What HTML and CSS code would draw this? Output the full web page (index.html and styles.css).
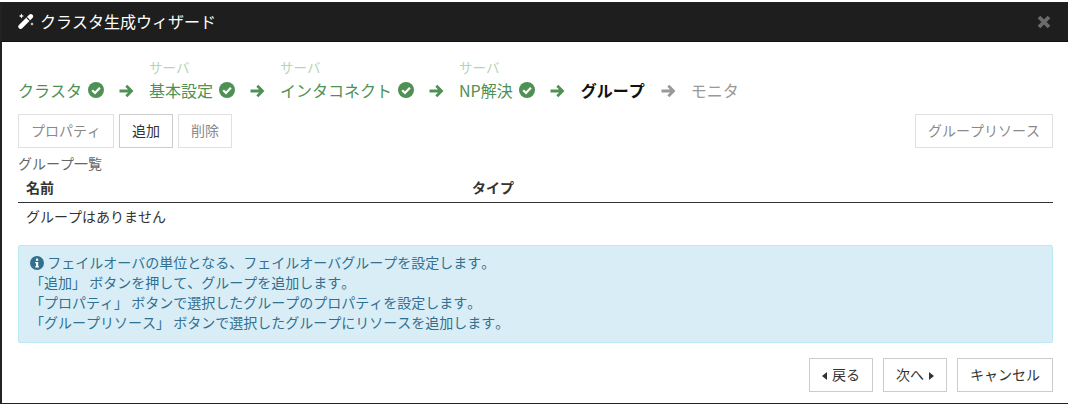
FILE: index.html
```html
<!DOCTYPE html>
<html lang="ja">
<head>
    <meta charset="UTF-8">
    <title>クラスタ生成ウィザード</title>
    <link rel="stylesheet" href="styles.css">
</head>
<body>
    <div class="dialog">
        <div class="dialog-header">
            <svg class="wand" viewBox="0 0 16 16" width="16" height="16">
                <path d="M2.6 13.6 12.8 3.4" fill="none" stroke="#fff" stroke-width="4.6" stroke-linecap="round"/>
                <path d="M8.6 4.4 11.8 7.6" fill="none" stroke="#1e1e1e" stroke-width="1.2"/>
                <path d="M3.4 .4 4.2 2.2 6 3 4.2 3.8 3.4 5.6 2.6 3.8 .8 3 2.6 2.2zM14 9.2 14.6 10.4 15.8 11 14.6 11.6 14 12.8 13.4 11.6 12.2 11 13.4 10.4z" fill="#fff"/>
            </svg>
            <span class="dialog-title">クラスタ生成ウィザード</span>
            <svg class="close" viewBox="0 0 14 14" width="14" height="14"><path d="M2 2 12 12M12 2 2 12" fill="none" stroke="#6b6b6b" stroke-width="3.8"/></svg>
        </div>
        <div class="dialog-body">
            <div class="steps">
                <div class="step done">
                    <span class="step-name">クラスタ</span>
                    <svg class="check" viewBox="0 0 16 16" width="16" height="16"><circle cx="8" cy="8" r="8" fill="#4f9154"/><path d="M4.2 8.2 7 11 11.9 5.8" fill="none" stroke="#fff" stroke-width="2.2"/></svg>
                </div>
                <svg class="arrow" viewBox="0 0 16 16" width="16" height="16"><path d="M1.5 8H13M8.3 2.8 13.5 8 8.3 13.2" fill="none" stroke="#4f9154" stroke-width="2.8"/></svg>
                <div class="step done">
                    <span class="step-sub">サーバ</span>
                    <span class="step-name">基本設定</span>
                    <svg class="check" viewBox="0 0 16 16" width="16" height="16"><circle cx="8" cy="8" r="8" fill="#4f9154"/><path d="M4.2 8.2 7 11 11.9 5.8" fill="none" stroke="#fff" stroke-width="2.2"/></svg>
                </div>
                <svg class="arrow" viewBox="0 0 16 16" width="16" height="16"><path d="M1.5 8H13M8.3 2.8 13.5 8 8.3 13.2" fill="none" stroke="#4f9154" stroke-width="2.8"/></svg>
                <div class="step done">
                    <span class="step-sub">サーバ</span>
                    <span class="step-name">インタコネクト</span>
                    <svg class="check" viewBox="0 0 16 16" width="16" height="16"><circle cx="8" cy="8" r="8" fill="#4f9154"/><path d="M4.2 8.2 7 11 11.9 5.8" fill="none" stroke="#fff" stroke-width="2.2"/></svg>
                </div>
                <svg class="arrow" viewBox="0 0 16 16" width="16" height="16"><path d="M1.5 8H13M8.3 2.8 13.5 8 8.3 13.2" fill="none" stroke="#4f9154" stroke-width="2.8"/></svg>
                <div class="step done">
                    <span class="step-sub">サーバ</span>
                    <span class="step-name">NP解決</span>
                    <svg class="check" viewBox="0 0 16 16" width="16" height="16"><circle cx="8" cy="8" r="8" fill="#4f9154"/><path d="M4.2 8.2 7 11 11.9 5.8" fill="none" stroke="#fff" stroke-width="2.2"/></svg>
                </div>
                <svg class="arrow" viewBox="0 0 16 16" width="16" height="16"><path d="M1.5 8H13M8.3 2.8 13.5 8 8.3 13.2" fill="none" stroke="#4f9154" stroke-width="2.8"/></svg>
                <div class="step current">
                    <span class="step-name">グループ</span>
                </div>
                <svg class="arrow" viewBox="0 0 16 16" width="16" height="16"><path d="M1.5 8H13M8.3 2.8 13.5 8 8.3 13.2" fill="none" stroke="#999" stroke-width="2.8"/></svg>
                <div class="step todo">
                    <span class="step-name">モニタ</span>
                </div>
            </div>

            <div class="toolbar">
                <button class="btn disabled">プロパティ</button>
                <button class="btn">追加</button>
                <button class="btn disabled">削除</button>
                <button class="btn disabled push-right">グループリソース</button>
            </div>

            <div class="list-label">グループ一覧</div>
            <div class="table-head">
                <div class="col-name">名前</div>
                <div>タイプ</div>
            </div>
            <div class="table-empty">グループはありません</div>

            <div class="info">
                <div>
                    <svg class="info-icon" viewBox="0 0 14 14" width="14" height="14"><circle cx="7" cy="7" r="7" fill="#31708f"/><rect x="6" y="2.6" width="2.2" height="2.2" fill="#fff"/><path d="M5.2 6H8.2V10.2H9V11.4H5.2V10.2H6V7.2H5.2z" fill="#fff"/></svg>
                    フェイルオーバの単位となる、フェイルオーバグループを設定します。
                </div>
                <div>「追加」 ボタンを押して、グループを追加します。</div>
                <div>「プロパティ」 ボタンで選択したグループのプロパティを設定します。</div>
                <div>「グループリソース」 ボタンで選択したグループにリソースを追加します。</div>
            </div>

            <div class="footer">
                <button class="btn"><span class="tri-left"></span>戻る</button>
                <button class="btn">次へ<span class="tri-right"></span></button>
                <button class="btn">キャンセル</button>
            </div>
        </div>
    </div>
</body>
</html>
```

FILE: styles.css
```css
html, body {
    margin: 0;
    padding: 0;
    background: white;
}

body {
    font-family: "Noto Sans CJK JP", "Noto Sans", sans-serif;
    font-size: 14px;
    font-kerning: none;
    color: #333;
    padding-top: 2px;
}

.dialog {
    width: 1068px;
    height: 402px;
    box-sizing: border-box;
    border: 1px solid #222;
    border-right: none;
    border-left-width: 2px;
    background: white;
}

.dialog-header {
    display: flex;
    align-items: center;
    height: 39px;
    box-sizing: border-box;
    padding: 0 17px 3px 16px;
    background: #1e1e1e;
    border-bottom: 1px solid #111;
    color: white;
}

.wand {
    margin-right: 6px;
}

.dialog-title {
    font-size: 16px;
    line-height: 22px;
}

.close {
    margin-left: auto;
    margin-top: 3px;
}

.dialog-body {
    padding: 0 15px 0 16px;
}

.steps {
    display: flex;
    align-items: flex-end;
    height: 60px;
}

.step {
    position: relative;
    display: flex;
    align-items: center;
    height: 24px;
    font-size: 16px;
}

.step.current {
    margin: 0 1px;
}

.step-sub {
    position: absolute;
    left: 0;
    top: -20px;
    font-size: 13.5px;
    line-height: 18px;
    color: #b4d6b6;
    white-space: nowrap;
}

.done .step-name {
    color: #4f9154;
}

.current .step-name {
    color: #111;
    font-weight: bold;
}

.todo .step-name {
    color: #999;
}

.check {
    margin-left: 6px;
}

.arrow {
    margin: 0 15px 3px 14px;
}

.toolbar {
    display: flex;
    gap: 5px;
    margin-top: 12px;
}

.btn {
    height: 34px;
    padding: 0 12px 2px;
    border: 1px solid #ccc;
    background: white;
    color: #333;
    font-family: inherit;
    font-size: 14px;
    font-kerning: none;
    line-height: 20px;
}

.btn.disabled {
    border-color: #e0e0e0;
    color: #8a8a8a;
}

.push-right {
    margin-left: auto;
}

.list-label {
    margin-top: 5px;
    line-height: 20px;
    color: #666;
}

.table-head {
    display: flex;
    height: 29px;
    padding-left: 8px;
    border-bottom: 1px solid #333;
    font-size: 14px;
    font-weight: bold;
    line-height: 29px;
}

.col-name {
    width: 446px;
}

.table-empty {
    padding: 3px 8px 7px;
    line-height: 20px;
}

.info {
    margin-top: 12px;
    height: 98px;
    box-sizing: border-box;
    padding: 6px 11px;
    background: #d9edf7;
    border: 1px solid #bce8f1;
    border-radius: 2px;
    color: #31708f;
    font-size: 14px;
    line-height: 20px;
}

.info-icon {
    vertical-align: -2px;
}

.footer {
    display: flex;
    justify-content: flex-end;
    gap: 10px;
    margin-top: 15px;
}

.tri-left, .tri-right {
    display: inline-block;
    border-top: 4px solid transparent;
    border-bottom: 4px solid transparent;
}

.tri-left {
    border-right: 5px solid #333;
    margin-right: 5px;
}

.tri-right {
    border-left: 5px solid #333;
    margin-left: 5px;
}
```
